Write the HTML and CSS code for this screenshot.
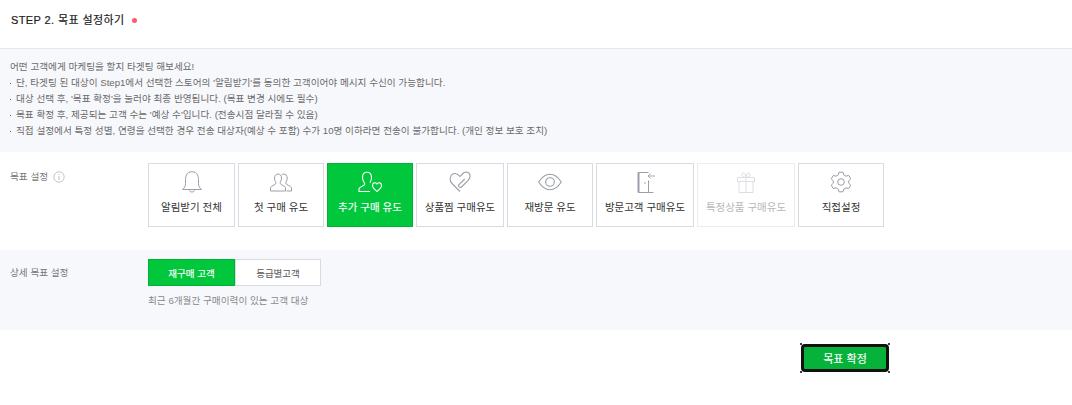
FILE: index.html
```html
<!DOCTYPE html>
<html lang="ko">
<head>
<meta charset="utf-8">
<title>STEP 2</title>
<link rel="stylesheet" href="styles.css">
</head>
<body>
<header class="head">
  <h1 class="title">STEP 2. 목표 설정하기</h1><span class="dot"></span>
</header>
<section class="intro">
  <p>어떤 고객에게 마케팅을 할지 타겟팅 해보세요!</p>
  <p class="li">단, 타겟팅 된 대상이 Step1에서 선택한 스토어의 '알림받기'를 동의한 고객이어야 메시지 수신이 가능합니다.</p>
  <p class="li">대상 선택 후, '목표 확정'을 눌러야 최종 반영됩니다. (목표 변경 시에도 필수)</p>
  <p class="li">목표 확정 후, 제공되는 고객 수는 '예상 수'입니다. (전송시점 달라질 수 있음)</p>
  <p class="li">직접 설정에서 특정 성별, 연령을 선택한 경우 전송 대상자(예상 수 포함) 수가 10명 이하라면 전송이 불가합니다. (개인 정보 보호 조치)</p>
</section>
<section class="goal">
  <div class="label">목표 설정 <svg class="info" width="12" height="12" viewBox="0 0 12 12"><circle cx="6" cy="6" r="5.200" fill="none" stroke="#b4b8c0" stroke-width=".8"/><path d="M6 5v4M6 3v1" stroke="#b4b8c0" stroke-width=".9"/></svg></div>
  <div class="cards">
    <button class="card w87">
      <svg class="ic" width="26" height="22" viewBox="0 0 26 22"><path d="M3.500 18.500c2-1.500 3-3.500 3-6v-4C6.500 3.500 9 .7 13 .7s6.500 2.800 6.500 7.800v4c0 2.500 1 4.500 3 6zM10 18.500c.3 1.600 1.400 2.500 3 2.500s2.700-.9 3-2.500" fill="none" stroke="#9a9ea8"/></svg>
      <span>알림받기 전체</span>
    </button>
    <button class="card w86">
      <svg class="ic" width="26" height="22" viewBox="0 0 26 22"><path d="M2.500 20v-3.500c0-1.500 5.500-2.500 5.500-4.500 0-1-1.500-2-1.500-5 0-2.500 1.500-4 3.500-4s3.500 1.500 3.500 4c0 3-1.500 4-1.500 5 0 2 5.500 3 5.500 4.500V20zM13.500 3.700c.8-.5 1.300-.7 2.200-.7 2 0 3.500 1.500 3.500 4 0 3-1.500 4-1.500 5 0 2 5.800 3 5.800 4.500V20h-5" fill="none" stroke="#9a9ea8"/></svg>
      <span>첫 구매 유도</span>
    </button>
    <button class="card w86 on">
      <svg class="ic" width="26" height="22" viewBox="0 0 26 22"><path d="M13 20.500H2v-2.800c0-1.700 5.800-2.700 5.800-4.700 0-1.200-2.300-2.800-2.300-6.500C5.500 3 7.500 1.200 10 1.200s4.500 1.800 4.500 5.300c0 2.500-.8 4-1.500 5.300M15.500 14.500c0 2.500 3 4.800 4.500 6 1.500-1.200 4.500-3.500 4.500-6 0-3-3-3.500-4.500-1.500-1.500-2-4.500-1.500-4.500 1.500z" fill="none" stroke="#fff" stroke-width="1.100"/></svg>
      <span>추가 구매 유도</span>
    </button>
    <button class="card w88">
      <svg class="ic" width="26" height="22" viewBox="0 0 26 22"><path d="M13 20.500 5 12.500C1.500 9 3.500 2.500 8 2.500c2 0 3 .8 5 3l3.500-3.500c3-2.300 7-.3 6.500 3.500 0 1.800-1 3-2.300 4.300l-6.200 6.200c-1.500 1.300-3.800-.7-2.500-2.300l5.700-5.700" fill="none" stroke="#9a9ea8" stroke-width="1.100"/></svg>
      <span>상품찜 구매유도</span>
    </button>
    <button class="card w86">
      <svg class="ic" width="26" height="22" viewBox="0 0 26 22"><path d="M1.700 11C5 5.700 9 3.200 13 3.200s8 2.500 11.300 7.800C21 16.300 17 18.800 13 18.800S5 16.300 1.700 11z" fill="none" stroke="#9a9ea8" stroke-width="1.100"/><circle cx="13" cy="11" r="4.300" fill="none" stroke="#9a9ea8" stroke-width="1.100"/></svg>
      <span>재방문 유도</span>
    </button>
    <button class="card w98">
      <svg class="ic" width="26" height="22" viewBox="0 0 26 22"><path d="M16.500 1.500H6.500v20h15M16.500 9.500v12" fill="none" stroke="#9a9ea8"/><path d="M6.500 1.500v20" fill="none" stroke="#9a9ea8" stroke-width="2"/><path d="M23 5h-7M18.500 2.500 16 5l2.500 2.500" fill="none" stroke="#9a9ea8" stroke-width=".9"/><circle cx="13" cy="12" r=".8" fill="#9a9ea8"/></svg>
      <span>방문고객 구매유도</span>
    </button>
    <button class="card w98 off">
      <svg class="ic" width="26" height="22" viewBox="0 0 26 22"><path d="M4.500 6.500h17v4h-17zM6 10.500h14v11H6zM13 6.500v15M13 6.500c-2.500 0-4-1-4-3s3-3 4 3c1-6 4-5 4-3s-1.500 3-4 3z" fill="none" stroke="#dcdee3"/></svg>
      <span>특정상품 구매유도</span>
    </button>
    <button class="card w86">
      <svg class="ic" width="26" height="22" viewBox="0 0 26 22"><path d="M11 1.200h4l.7 2.700 2.300 1.300 2.700-.8 2 3.500-2 1.900v2.400l2 1.900-2 3.500-2.700-.8-2.300 1.300-.7 2.700h-4l-.7-2.700-2.300-1.300-2.700.8-2-3.500 2-1.900V9.800l-2-1.900 2-3.500 2.700.8 2.300-1.300z" fill="none" stroke="#9a9ea8" stroke-linejoin="round"/><circle cx="13" cy="11" r="3.300" fill="none" stroke="#9a9ea8"/></svg>
      <span>직접설정</span>
    </button>
  </div>
</section>
<section class="detail">
  <div class="label">상세 목표 설정</div>
  <div class="detail-body">
    <div class="tabs">
      <button class="tab on">재구매 고객</button>
      <button class="tab">등급별고객</button>
    </div>
    <p class="note">최근 6개월간 구매이력이 있는 고객 대상</p>
  </div>
</section>
<div class="actions">
  <button class="confirm">목표 확정</button>
</div>
</body>
</html>
```
FILE: styles.css
```css
* { box-sizing: border-box; }
html, body { margin: 0; padding: 0; }
body {
  width: 1072px;
  height: 405px;
  overflow: hidden;
  background: #fff;
  font-family: "Liberation Sans", "Noto Sans CJK KR", sans-serif;
  color: #333;
}
button { font-family: inherit; margin: 0; padding: 0; cursor: pointer; }
p { margin: 0; }
.head {
  height: 49px;
  display: flex;
  align-items: center;
  padding: 0 0 8px 11px;
  border-bottom: 1px solid #e4e7ef;
}
.title { margin: 0; font-size: 11px; line-height: 14px; font-weight: 400; color: #222; letter-spacing: .4px; -webkit-text-stroke: .2px #222; }
.dot { width: 5px; height: 5px; margin-left: 7px; border-radius: 50%; background: #ff5a6a; }
.intro {
  height: 103px;
  padding: 10px 0 0 10px;
  background: #f7f8fc;
  font-size: 9.650px;
  line-height: 16px;
  color: #6a6a6a;
}
.li { position: relative; padding-left: 6px; }
.li::before { content: ""; position: absolute; left: 0; top: 8px; width: 1px; height: 1px; background: #666; }
.goal { height: 98px; display: flex; padding: 13px 0 0 10px; }
.label { width: 138px; font-size: 9.650px; line-height: 24px; color: #777; flex: none; display: flex; gap: 5px; align-items: center; height: 24px; }
.info { flex: none; }
.cards { display: flex; gap: 3px; height: 64px; margin-top: -2px; }
.card {
  height: 64px;
  background: #fff;
  border: 1px solid #d9dbe0;
  display: flex;
  flex-direction: column;
  align-items: center;
  font-size: 10.500px;
  line-height: 14px;
  color: #333;
  padding-top: 7px;
}
.ic { display: block; margin-bottom: 7px; }
.card.on { background: #00c73c; border-color: #00b336; color: #fff; -webkit-text-stroke: .15px #fff; }
.card.off { border-color: #eceded; color: #b8b8b8; }
.w86 { width: 86px; }
.w87 { width: 87px; }
.w88 { width: 88px; }
.w98 { width: 98px; }
.detail { height: 80px; display: flex; padding: 9px 0 0 10px; background: #f7f8fc; }
.detail .label { height: 27px; line-height: 27px; }
.tabs { display: flex; }
.tab {
  width: 86px;
  height: 27px;
  border: 1px solid #d9dbe0;
  background: #fff;
  font-size: 9.500px;
  color: #555;
}
.tab.on { width: 87px; background: #00c73c; border-color: #00b336; color: #fff; -webkit-text-stroke: .15px #fff; }
.note { margin-top: 8px; font-size: 9.650px; line-height: 14px; color: #888; }
.actions { display: flex; padding: 14px 0 0 801px; }
.confirm {
  position: relative;
  width: 88px;
  height: 28px;
  background: #06b23a;
  border: 3px solid #111;
  border-radius: 4px;
  color: #fff;
  font-size: 11px;
  -webkit-text-stroke: .15px #fff;
}
.confirm::after {
  content: "";
  position: absolute;
  inset: -4px;
  background:
    linear-gradient(#2d4a3f, #2d4a3f) 0 0 / 2px 2px no-repeat,
    linear-gradient(#2d4a3f, #2d4a3f) 100% 0 / 2px 2px no-repeat,
    linear-gradient(#2d4a3f, #2d4a3f) 0 100% / 2px 2px no-repeat,
    linear-gradient(#2d4a3f, #2d4a3f) 100% 100% / 2px 2px no-repeat;
}
```
